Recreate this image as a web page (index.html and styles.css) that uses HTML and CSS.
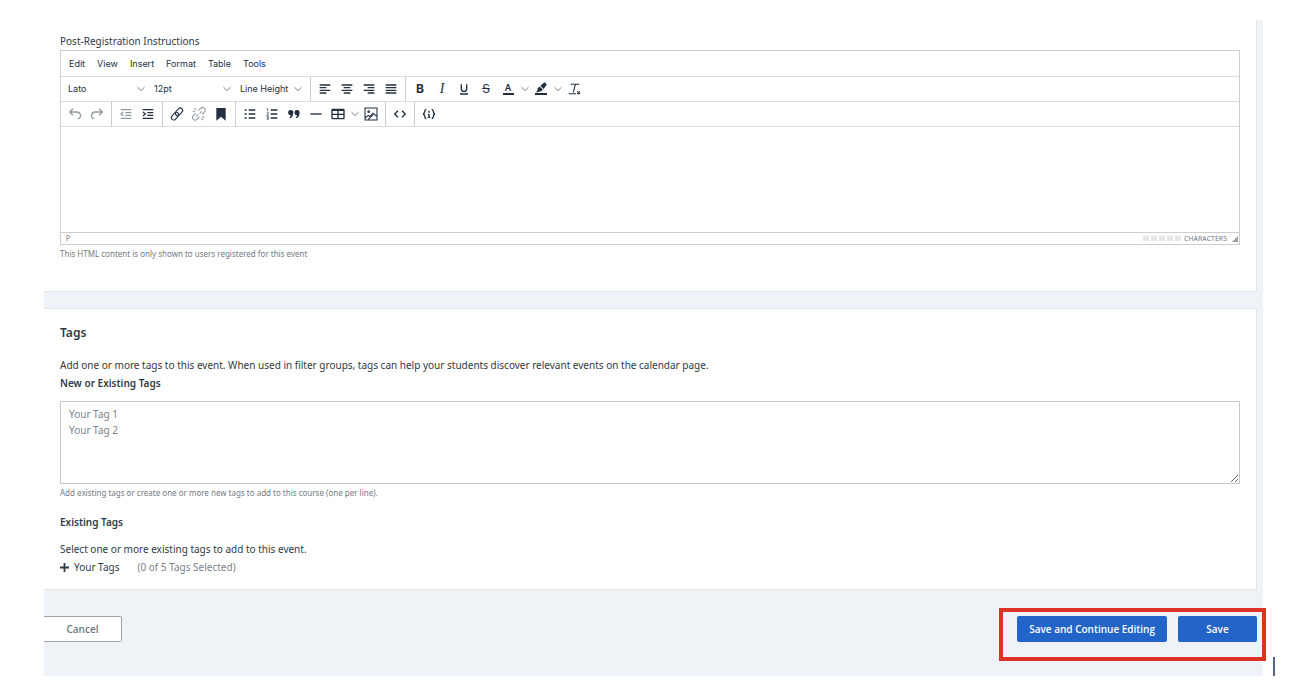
FILE: index.html
```html
<!DOCTYPE html>
<html lang="en">
<head>
<meta charset="utf-8">
<meta name="viewport" content="width=device-width, initial-scale=1">
<title>Edit Event</title>
<link rel="stylesheet" href="styles.css">
</head>
<body>
<svg class="sprite" aria-hidden="true">
  <symbol id="chev" viewBox="0 0 10 10"><path d="M1.5 3.2 5 6.6 8.5 3.2" fill="none" stroke="currentColor" stroke-width="1"/></symbol>
</svg>
<main class="page">
  <section class="panel panel-editor">
    <label class="label" for="instructions">Post-Registration Instructions</label>
    <div class="editor">
      <div class="menubar">
        <button type="button">Edit</button><button type="button">View</button><button type="button">Insert</button><button type="button">Format</button><button type="button">Table</button><button type="button">Tools</button>
      </div>
      <div class="toolbar">
        <div class="group">
          <span class="pick"><select aria-label="Font"><option>Lato</option></select><svg class="chev"><use href="#chev"/></svg></span>
          <span class="pick"><select aria-label="Font size"><option>12pt</option></select><svg class="chev"><use href="#chev"/></svg></span>
          <span class="pick pick-short"><select aria-label="Line height"><option>Line Height</option></select><svg class="chev"><use href="#chev"/></svg></span>
        </div>
        <div class="group">
          <button type="button" class="tool" aria-label="Align left"><svg viewBox="0 0 24 24"><path d="M4 6h16M4 10h10M4 14h16M4 18h10"/></svg></button>
          <button type="button" class="tool" aria-label="Align center"><svg viewBox="0 0 24 24"><path d="M4 6h16M7 10h10M4 14h16M7 18h10"/></svg></button>
          <button type="button" class="tool" aria-label="Align right"><svg viewBox="0 0 24 24"><path d="M4 6h16M10 10h10M4 14h16M10 18h10"/></svg></button>
          <button type="button" class="tool" aria-label="Justify"><svg viewBox="0 0 24 24"><path d="M4 6h16M4 10h16M4 14h16M4 18h16"/></svg></button>
        </div>
        <div class="group">
          <button type="button" class="tool bold" aria-label="Bold">B</button>
          <button type="button" class="tool italic" aria-label="Italic">I</button>
          <button type="button" class="tool" aria-label="Underline"><svg viewBox="0 0 24 24"><path d="M8 5v6.500a4 4 0 0 0 8 0V5M6 19.500h12"/></svg></button>
          <button type="button" class="tool strike" aria-label="Strikethrough">S</button>
          <button type="button" class="tool color" aria-label="Text color"><span>A</span></button>
          <button type="button" class="more" aria-label="Text color options"><svg class="chev"><use href="#chev"/></svg></button>
          <button type="button" class="tool" aria-label="Highlight color"><svg viewBox="0 0 24 24"><path class="solid" d="M3 18h18v3H3zM7.600 16.700H4.200l2.500-2.500.3-3.200 3-2.900 4.800 4.800-3.200 3H9zM11 7l5.300-4.200c.6-.6 1.500-.6 2.100 0l1.600 1.600c.6.600.6 1.500 0 2.100L15.800 12z"/></svg></button>
          <button type="button" class="more" aria-label="Highlight color options"><svg class="chev"><use href="#chev"/></svg></button>
          <button type="button" class="tool clear" aria-label="Clear formatting"><svg class="light" viewBox="0 0 24 24"><path d="M7 5h13M14 5l-3 12M4 19h11M17 15.500l4 4M21 15.500l-4 4"/></svg></button>
        </div>
      </div>
      <div class="toolbar">
        <div class="group">
          <button type="button" class="tool dim" aria-label="Undo"><svg viewBox="0 0 24 24"><path d="M9 4 4 9l5 5M4.500 9H14c8 0 8 10 2 10"/></svg></button>
          <button type="button" class="tool dim" aria-label="Redo"><svg viewBox="0 0 24 24"><path d="m15 4 5 5-5 5M19.500 9H10c-8 0-8 10-2 10"/></svg></button>
        </div>
        <div class="group">
          <button type="button" class="tool dim" aria-label="Decrease indent"><svg viewBox="0 0 24 24"><path d="M4 5.500h16M11 10h9M11 14h9M4 18.500h16M8 9l-3.500 3L8 15"/></svg></button>
          <button type="button" class="tool" aria-label="Increase indent"><svg viewBox="0 0 24 24"><path d="M4 5.500h16M11 10h9M11 14h9M4 18.500h16M4.500 9 8 12l-3.500 3"/></svg></button>
        </div>
        <div class="group">
          <button type="button" class="tool" aria-label="Link"><svg class="light" viewBox="0 0 24 24"><g transform="rotate(-48 12 12)"><rect x="1" y="8.500" width="13" height="7" rx="3.500"/><rect x="10" y="8.500" width="13" height="7" rx="3.500"/></g></svg></button>
          <button type="button" class="tool dim" aria-label="Remove link"><svg class="light" viewBox="0 0 24 24"><path d="m11 7 3.500-3.500a3.700 3.700 0 0 1 5.500 5.500l-3.500 3.500M7 11l-3.500 3.500a3.700 3.700 0 0 0 5.500 5.500l3.500-3.500M8 16l3-3M13 11l3-3M5 3l2.500 3M2.500 7.500 6 8.500M17 16l4 1M16 18l2 3.500"/></svg></button>
          <button type="button" class="tool" aria-label="Bookmark"><svg viewBox="0 0 24 24"><path class="solid" d="M5 3h14v19l-7-6-7 6z"/></svg></button>
        </div>
        <div class="group">
          <button type="button" class="tool" aria-label="Bullet list"><svg viewBox="0 0 24 24"><path d="M10 6h10M10 12h10M10 18h10M4 6h3M4 12h3M4 18h3"/></svg></button>
          <button type="button" class="tool" aria-label="Numbered list"><svg viewBox="0 0 24 24"><path d="M10 6h10M10 12h10M10 18h10"/><path class="thin" d="M4 4h1.500v4M4 10h2.500v1.500L4 14h3M4 16h2.500v4H4M4.500 18h2"/></svg></button>
          <button type="button" class="tool" aria-label="Blockquote"><svg viewBox="0 0 24 24"><path class="solid" d="M7 6a3.800 3.800 0 0 1 3.900 4c0 4-1.600 7-4.900 8.500L5 17c1.400-1 2-2 2.200-3.200A3.900 3.900 0 0 1 7 6zm9.500 0a3.800 3.800 0 0 1 3.900 4c0 4-1.600 7-4.900 8.500l-1-1.500c1.400-1 2-2 2.200-3.200A3.900 3.900 0 0 1 16.500 6z"/></svg></button>
          <button type="button" class="tool" aria-label="Horizontal line"><svg viewBox="0 0 24 24"><path d="M3.500 12h17"/></svg></button>
          <button type="button" class="tool" aria-label="Table"><svg viewBox="0 0 24 24"><path d="M4 5h16a1 1 0 0 1 1 1v12a1 1 0 0 1-1 1H4a1 1 0 0 1-1-1V6a1 1 0 0 1 1-1zM3 12.500h18M12 6v13M3 6.500h18"/></svg></button>
          <button type="button" class="more" aria-label="Table options"><svg class="chev"><use href="#chev"/></svg></button>
          <button type="button" class="tool" aria-label="Image"><svg class="light" viewBox="0 0 24 24"><path d="M3 3h18v18H3zM3 18l5-4 2.500 2L15 11l6 5M8 20l7-7"/><circle cx="8.500" cy="8.500" r="1.200"/></svg></button>
        </div>
        <div class="group">
          <button type="button" class="tool" aria-label="Source code"><svg viewBox="0 0 24 24"><path d="m9 7-5 5 5 5M15 7l5 5-5 5"/></svg></button>
        </div>
        <div class="group">
          <button type="button" class="tool" aria-label="Insert variable"><svg viewBox="0 0 24 24"><path d="M8 5C4 5 7 11.500 3 12c4 .500 1 7 5 7M16 5c4 0 1 6.500 5 7-4 .500-1 7-5 7"/><path d="M12 7v3M12 12v5M10.500 12.500H12M10 17h4"/></svg></button>
        </div>
      </div>
      <textarea class="canvas" id="instructions"></textarea>
      <div class="status">
        <span>P</span>
        <span class="count"><i></i><i></i><i></i><i></i><i></i><span>CHARACTERS</span>
          <svg class="grip" viewBox="0 0 8 8"><path d="M7 0h1v8H0V7h2V5h2V3h2V1h1z"/></svg></span>
      </div>
    </div>
    <p class="hint">This HTML content is only shown to users registered for this event</p>
  </section>

  <section class="panel panel-tags">
    <h2>Tags</h2>
    <p class="text">Add one or more tags to this event. When used in filter groups, tags can help your students discover relevant events on the calendar page.</p>
    <label class="strong" for="tags">New or Existing Tags</label>
    <textarea class="tags" id="tags" placeholder="Your Tag 1&#10;Your Tag 2"></textarea>
    <p class="hint">Add existing tags or create one or more new tags to add to this course (one per line).</p>
    <h3>Existing Tags</h3>
    <p class="text">Select one or more existing tags to add to this event.</p>
    <div class="expand">
      <button type="button"><svg viewBox="0 0 10 10"><path d="M5 0v10M0 5h10"/></svg>Your Tags</button>
      <span>(0 of 5 Tags Selected)</span>
    </div>
  </section>

  <footer class="actions">
    <button type="button" class="btn cancel">Cancel</button>
    <div class="saves">
      <button type="submit" class="btn primary">Save and Continue Editing</button>
      <button type="submit" class="btn primary save">Save</button>
      <span class="callout"></span>
    </div>
  </footer>
  <span class="caret"></span>
</main>
</body>
</html>
```
FILE: styles.css
```css
* { box-sizing: border-box; }
body {
  margin: 0;
  background: #fff;
  color: #2d3b45;
  font: 10px/18px "Noto Sans", "Open Sans", sans-serif;
}
button, select, textarea { font: inherit; color: inherit; }
button { border: 0; padding: 0; background: none; cursor: pointer; }
p, h2, h3 { margin: 0; }
.sprite { position: absolute; width: 0; height: 0; }

.page {
  position: relative;
  margin: 20px 47px 16px 44px;
  padding: 0 6px 34px 0;
  background: #eff3f7;
}
.panel {
  background: #fff;
  border: solid #e2e5e8;
  border-width: 0 1px 1px 0;
  padding: 0 16px;
}
.panel-editor { padding-top: 12px; padding-bottom: 29px; }
.panel-tags { margin-top: 16px; border-top-width: 1px; padding-top: 15px; padding-bottom: 13px; }
.label { display: block; }

.editor {
  border: 1px solid #ccc;
  color: #222f3e;
  font-family: Inter, Roboto, sans-serif;
  font-size: 9px;
}
.menubar, .toolbar { display: flex; border-bottom: 1px solid #ddd; }
.menubar { height: 26px; padding: 0 2px; }
.toolbar { height: 25px; }
.menubar button { padding: 0 6px; }
.group { display: flex; align-items: center; padding: 0 3px; border-right: 1px solid #ccc; }
.group:last-child { border-right: 0; }
.pick { position: relative; width: 86px; }
.pick-short { width: 71px; }
.pick select {
  display: block;
  width: 100%;
  border: 0;
  padding: 0 12px 0 4px;
  background: none;
  appearance: none;
}
.pick .chev { position: absolute; right: 4px; top: 4px; pointer-events: none; }
.chev { width: 10px; height: 10px; color: #7c848d; }
.tool, .more { display: flex; align-items: center; justify-content: center; height: 24px; }
.tool { width: 22px; }
.more { width: 11px; }
.tool svg { width: 16px; height: 16px; fill: none; stroke: currentColor; stroke-width: 2; }
.tool .light { stroke-width: 1.6; }
.tool .solid { fill: currentColor; stroke: none; }
.tool .thin { stroke-width: 1; }
.dim { color: #929aa2; }
.bold { font-size: 12px; font-weight: 700; }
.italic { font: italic 14px "Liberation Serif", serif; }
.strike { font-size: 12px; text-decoration: line-through; }
.color span { width: 11px; border-bottom: 2px solid; font-size: 9px; font-weight: 600; line-height: 10px; }
.canvas { display: block; width: 100%; height: 105px; border: 0; padding: 8px; resize: none; }
.status {
  display: flex;
  justify-content: space-between;
  height: 12px;
  padding: 0 1px 0 5px;
  border-top: 1px solid #ccc;
  color: #68727c;
  font-size: 7px;
  line-height: 11px;
}
.count { display: flex; align-items: center; gap: 2px; font-family: "Open Sans", sans-serif; }
.count i { width: 6px; height: 5px; background: #e4e6e8; }
.count span { margin-left: 1px; }
.grip { width: 6px; height: 6px; margin-left: 3px; fill: #9aa0a6; }
.hint { color: #737b84; font-size: 8px; line-height: 17px; }

h2 { font-size: 12px; font-weight: 600; margin-bottom: 14px; }
h3, .strong { display: block; font-size: 10px; font-weight: 600; }
h3 { margin: 12px 0 9px; }
.tags {
  display: block;
  width: 100%;
  height: 83px;
  margin-top: 9px;
  padding: 4px 8px;
  border: 1px solid #c3c9cf;
  background: #fff;
  line-height: 16px;
  resize: vertical;
}
.tags::placeholder { color: #7b828a; }
.expand { display: flex; gap: 18px; color: #7b828a; }
.expand button { display: flex; align-items: center; gap: 5px; color: #2d3b45; }
.expand svg { width: 9px; height: 9px; stroke: currentColor; stroke-width: 2; }

.actions { display: flex; justify-content: space-between; padding-top: 26px; }
.saves { position: relative; display: flex; gap: 11px; }
.btn { height: 26px; border-radius: 2px; font-family: "Open Sans", sans-serif; font-weight: 600; }
.cancel {
  width: 78px;
  border: 1px solid #9ea6ad;
  border-left: 0;
  border-radius: 0 2px 2px 0;
  background: #fff;
  color: #6d7883;
}
.primary { padding: 0 12px; background: #2264c7; color: #fff; }
.save { width: 79px; }
.callout {
  position: absolute;
  inset: -8px -9px -19px -18px;
  border: 4px solid #de3226;
  pointer-events: none;
}
.caret {
  position: absolute;
  right: -12px;
  bottom: 0;
  width: 2px;
  height: 19px;
  background: #5b6287;
}
```
